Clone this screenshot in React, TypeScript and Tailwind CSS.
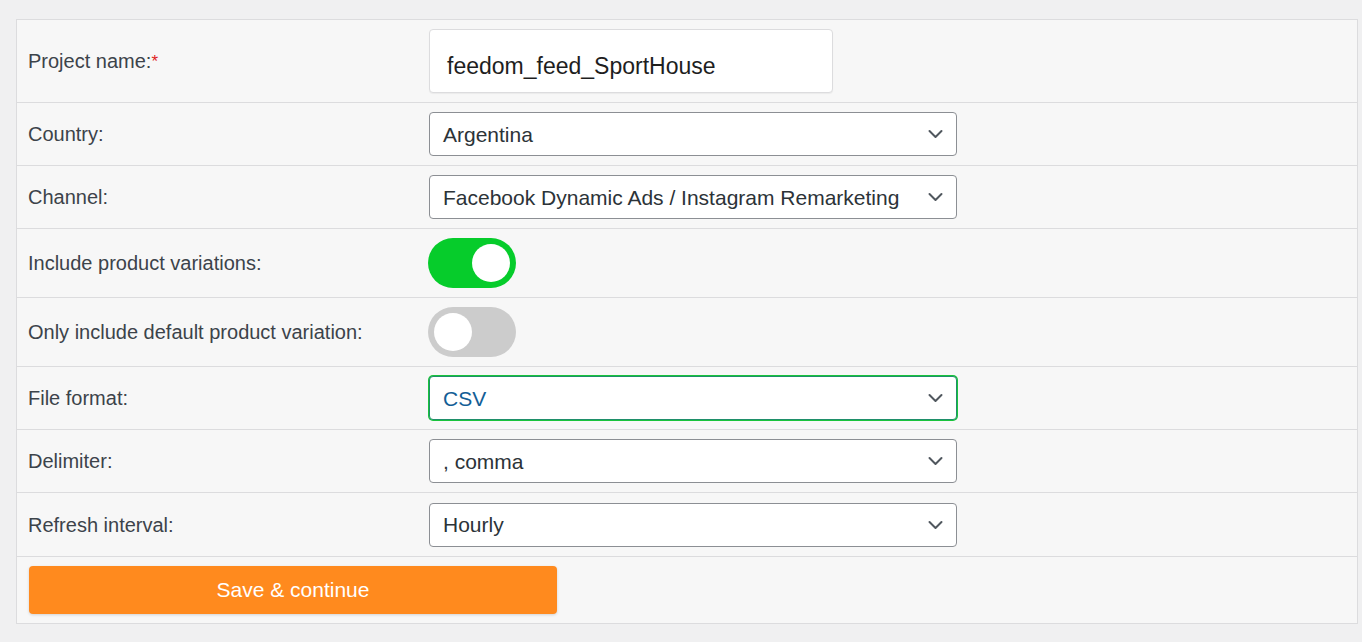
import { useState } from "react";

const font = { fontFamily: '"Liberation Sans", Arial, sans-serif' };

function Chevron() {
  return (
    <svg
      className="absolute right-[13px] top-1/2 -translate-y-1/2"
      width="15"
      height="9"
      viewBox="0 0 15 9"
      fill="none"
    >
      <path
        d="M1.5 1.5 7.5 7.5 13.5 1.5"
        stroke="#50575e"
        strokeWidth="2"
        strokeLinecap="round"
        strokeLinejoin="round"
      />
    </svg>
  );
}

function SelectBox({ value, focused }: { value: string; focused?: boolean }) {
  return (
    <div
      className={`relative flex items-center bg-white rounded-[4px] w-[528px] h-[44px] pl-[13px] text-[21px] ${
        focused
          ? "border border-[#1f8f6a] shadow-[0_0_0_1px_#19c33c] text-[#135e96]"
          : "border border-[#8c8f94] text-[#2c3338]"
      }`}
    >
      <span className="leading-none">{value}</span>
      <Chevron />
    </div>
  );
}

function Toggle({ on }: { on: boolean }) {
  return (
    <div
      className={`flex items-center w-[88px] h-[50px] rounded-full px-[6px] -ml-px ${
        on ? "bg-[#06cc2b] justify-end" : "bg-[#cccccc] justify-start"
      }`}
    >
      <div className="bg-white rounded-full w-[38px] h-[38px]" />
    </div>
  );
}

function Row({
  label,
  required,
  height,
  children,
}: {
  label: string;
  required?: boolean;
  height: string;
  children: React.ReactNode;
}) {
  return (
    <div className={`flex items-center border-b border-[#dcdcde] ${height}`}>
      <div className="w-[412px] pl-[11px] text-[20px] text-[#3c434a]">
        {label}
        {required && (
          <span className="relative -top-[1px] text-[17px] text-[#e01e1e]">*</span>
        )}
      </div>
      <div className="flex items-center">{children}</div>
    </div>
  );
}

export default function App() {
  const [name] = useState("feedom_feed_SportHouse");

  return (
    <div className="bg-[#f0f0f1] w-full h-[642px] pt-[19px] pl-[16px] pr-[4px]" style={font}>
      <div className="bg-[#f7f7f7] border border-[#dcdcde]">
        {/* Project name */}
        <Row label="Project name:" required height="h-[83px]">
          <div className="flex items-center bg-white border border-[#dcdcde] rounded-[4px] shadow-[0_1px_1px_rgba(0,0,0,0.05)] w-[404px] h-[64px] pl-[17px] pt-[10px] text-[23px] text-[#1e1e1e]">
            {name}
          </div>
        </Row>

        <Row label="Country:" height="h-[63px]">
          <SelectBox value="Argentina" />
        </Row>

        <Row label="Channel:" height="h-[63px]">
          <SelectBox value="Facebook Dynamic Ads / Instagram Remarketing" />
        </Row>

        <Row label="Include product variations:" height="h-[69px]">
          <Toggle on />
        </Row>

        <Row label="Only include default product variation:" height="h-[69px]">
          <Toggle on={false} />
        </Row>

        <Row label="File format:" height="h-[63px]">
          <SelectBox value="CSV" focused />
        </Row>

        <Row label="Delimiter:" height="h-[63px]">
          <SelectBox value=", comma" />
        </Row>

        <Row label="Refresh interval:" height="h-[64px]">
          <SelectBox value="Hourly" />
        </Row>

        {/* Submit */}
        <div className="flex items-center h-[66px] pl-[12px]">
          <button className="bg-[#ff8a1e] shadow-[0_1px_3px_rgba(0,0,0,0.15)] rounded-[4px] w-[528px] h-[48px] text-[21px] text-white">
            Save &amp; continue
          </button>
        </div>
      </div>
    </div>
  );
}
